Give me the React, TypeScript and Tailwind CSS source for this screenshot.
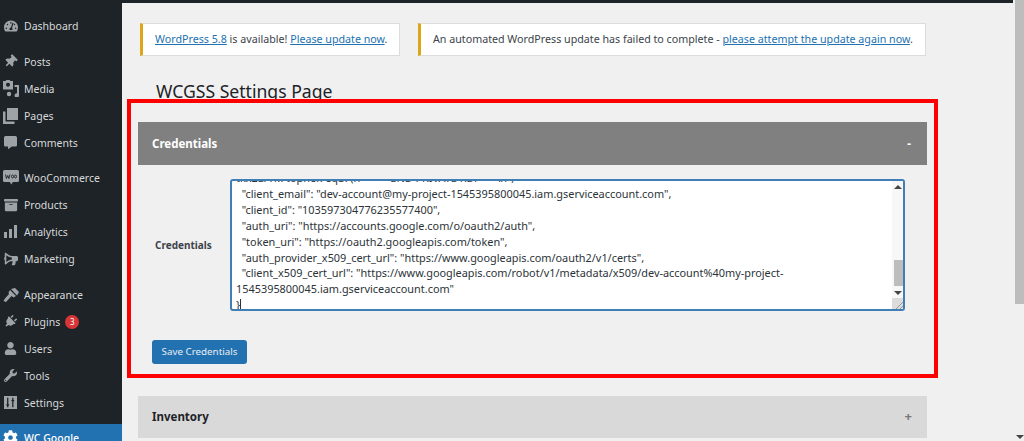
import type { ReactNode } from 'react';
import { FaTachometerAlt, FaThumbtack, FaCommentAlt, FaArchive, FaBullhorn, FaPlug, FaUser, FaWrench, FaCog } from 'react-icons/fa';

const font = "font-['Noto_Sans','Open_Sans',sans-serif]";

function MediaIcon() {
  return (
    <svg width="16" height="17" viewBox="0 0 16 17" fill="currentColor">
      <path d="M0 1h2.500l1-1h3l1 1H10v8.500H0z" />
      <circle cx="5" cy="4.700" r="2" fill="#1d2327" />
      <path d="M11.500 5H16v10.500a2.200 2.200 0 1 1-2-2.200V7h-2.500z" />
      <circle cx="6" cy="14" r="2.200" />
    </svg>
  );
}

function PagesIcon() {
  return (
    <svg width="15" height="16" viewBox="0 0 15 16" fill="currentColor">
      <path d="M4 0h11v12H4z" />
      <path d="M0 3.500h2.500v10h9V16H0z" />
    </svg>
  );
}

function WooIcon() {
  return (
    <svg width="16" height="15" viewBox="0 0 16 15" fill="currentColor">
      <path d="M1.500 0h13A1.500 1.500 0 0 1 16 1.500v9a1.500 1.500 0 0 1-1.500 1.500H10l-2 2.500L7 12H1.500A1.500 1.500 0 0 1 0 10.500v-9A1.500 1.500 0 0 1 1.500 0z" />
      <path d="M2.500 4.500l1 4 1.200-3 1.200 3 1-4M8.500 6.500a1 1.500 0 1 0 2 0 1 1.500 0 1 0-2 0M11.500 6.500a1 1.500 0 1 0 2 0 1 1.500 0 1 0-2 0" fill="none" stroke="#1d2327" strokeWidth="0.9" />
    </svg>
  );
}

function BrushIcon() {
  return (
    <svg width="16" height="14" viewBox="0 0 16 14" fill="currentColor">
      <path d="M8 1l4-1 4 4-2 3.500z" />
      <path d="M7 2l6 6-2.500 1.500L8.500 8 3 14 .500 13 2 10.500l4-4.500-.5-1.500z" />
    </svg>
  );
}

function BarsIcon() {
  return (
    <svg width="14" height="14" viewBox="0 0 14 14" fill="currentColor">
      <rect x="0" y="7" width="3" height="6" />
      <rect x="5" y="4" width="3" height="9" />
      <rect x="10" y="0" width="3" height="13" />
    </svg>
  );
}

function SlidersIcon() {
  return (
    <svg width="13" height="13" viewBox="0 0 14 14">
      <rect width="14" height="14" fill="currentColor" />
      <path d="M4 2v10M2.500 9.500h3M9.500 2v10M8 5h3" stroke="#1d2327" strokeWidth="1.400" fill="none" />
    </svg>
  );
}

interface MenuItemProps {
  icon: ReactNode;
  label: string;
  badge?: string;
  active?: boolean;
  gap?: string;
}

function MenuItem({ icon, label, badge, active, gap }: MenuItemProps) {
  return (
    <div className={`flex items-center h-[27px] shrink-0 ${gap ?? ''} ${active ? 'bg-[#2271b1] text-white font-medium' : 'text-[#d8d9da]'}`}>
      <span className={`w-[24px] flex justify-center pr-[4px] pl-[1px] ${active ? 'text-white' : 'text-[#9ea3a8]'}`}>{icon}</span>
      <span className="text-[10.5px] leading-[16px]">{label}</span>
      {badge && (
        <span className="ml-[5px] w-[14px] h-[14px] rounded-full bg-[#d63638] text-white text-[8px] leading-[14px] text-center">
          {badge}
        </span>
      )}
    </div>
  );
}

function Sidebar() {
  return (
    <div className="w-[122px] shrink-0 h-full bg-[#1d2327] flex flex-col pt-[12px] overflow-hidden">
      <MenuItem icon={<FaTachometerAlt size={14} />} label="Dashboard" />
      <MenuItem gap="mt-[9px]" icon={<FaThumbtack size={13} className="rotate-45" />} label="Posts" />
      <MenuItem icon={<MediaIcon />} label="Media" />
      <MenuItem icon={<PagesIcon />} label="Pages" />
      <MenuItem icon={<FaCommentAlt size={13} />} label="Comments" />
      <MenuItem gap="mt-[8px]" icon={<WooIcon />} label="WooCommerce" />
      <MenuItem icon={<FaArchive size={14} />} label="Products" />
      <MenuItem icon={<BarsIcon />} label="Analytics" />
      <MenuItem icon={<FaBullhorn size={14} className="-scale-x-100" />} label="Marketing" />
      <MenuItem gap="mt-[9px]" icon={<BrushIcon />} label="Appearance" />
      <MenuItem icon={<FaPlug size={13} className="rotate-45" />} label="Plugins" badge="3" />
      <MenuItem icon={<FaUser size={13} />} label="Users" />
      <MenuItem icon={<FaWrench size={13} />} label="Tools" />
      <MenuItem icon={<SlidersIcon />} label="Settings" />
      <MenuItem gap="mt-[8px]" active icon={<FaCog size={15} />} label="WC Google" />
    </div>
  );
}

function Notice({ width, children }: { width: string; children: ReactNode }) {
  return (
    <div className={`${width} h-[33px] flex items-center bg-white border border-[#dcdcdc] border-l-[3px] border-l-[#dba617] pl-[12px] text-[10.7px] text-[#3c434a] whitespace-nowrap`}>
      {children}
    </div>
  );
}

const link = 'text-[#2271b1] underline';

const lines = [
  '  "client_email": "dev-account@my-project-1545395800045.iam.gserviceaccount.com",',
  '  "client_id": "103597304776235577400",',
  '  "auth_uri": "https://accounts.google.com/o/oauth2/auth",',
  '  "token_uri": "https://oauth2.googleapis.com/token",',
  '  "auth_provider_x509_cert_url": "https://www.googleapis.com/oauth2/v1/certs",',
  '  "client_x509_cert_url": "https://www.googleapis.com/robot/v1/metadata/x509/dev-account%40my-project-',
  '1545395800045.iam.gserviceaccount.com"',
];

function CredentialsBox() {
  return (
    <div className="w-[675px] h-[132px] flex bg-white border-2 border-[#3f7fb5] rounded-[3px] overflow-hidden">
      <div className="flex-1 overflow-hidden pl-[4px] text-[10.9px] leading-[15.9px] text-[#2c3338] whitespace-pre">
        <div className="-mt-[11px]">{'tkx2LrTk7tophei7eqa7(n==-----END PRIVATE KEY-----\\n",'}</div>
        {lines.map((line, i) => (
          <div key={i}>{line}</div>
        ))}
        <div className="flex items-center">
          <span>{'}'}</span>
          <span className="w-px h-[13px] bg-[#2c3338]" />
        </div>
      </div>
      <div className="w-[11px] shrink-0 flex flex-col items-center bg-[#f7f7f7]">
        <span className="mt-[4px] w-0 h-0 border-x-[4px] border-x-transparent border-b-[4px] border-b-[#444]" />
        <span className="mt-[71px] w-[9px] h-[26px] ml-[2px] bg-[#bdbdbd]" />
        <span className="mt-[5px] w-0 h-0 border-x-[4px] border-x-transparent border-t-[4px] border-t-[#444]" />
        <span className="mt-auto w-[11px] h-[11px] bg-[#dcdcdc] flex items-end justify-end">
          <svg width="8" height="8" viewBox="0 0 8 8" stroke="#888" strokeWidth="0.8">
            <path d="M1 8l7-7M5 8l3-3" />
          </svg>
        </span>
      </div>
    </div>
  );
}

function PageScrollbar() {
  return (
    <div className="w-[11px] shrink-0 pl-[2px] h-full flex flex-col bg-[#f0f0f1]">
      <div className="h-[304px] bg-[#bdbdbd]" />
      <span className="mt-auto mb-[2px] ml-[1px] w-0 h-0 border-x-[4px] border-x-transparent border-t-[4px] border-t-[#444]" />
    </div>
  );
}

export default function App() {
  return (
    <div className={`relative w-[1024px] h-[441px] overflow-hidden flex bg-[#f0f0f1] ${font}`}>
      <Sidebar />
      <div className="flex-1 min-w-0 flex flex-col">
        <div className="h-[3px] bg-[#1d2327] shrink-0" />
        <div className="flex gap-[18px] ml-[18px] mt-[20px] shrink-0">
          <Notice width="w-[260px]">
            <span>
              <span className={link}>WordPress 5.8</span> is available! <span className={link}>Please update now</span>.
            </span>
          </Notice>
          <Notice width="w-[508px]">
            <span>
              An automated WordPress update has failed to complete -{' '}
              <span className={link}>please attempt the update again now</span>.
            </span>
          </Notice>
        </div>
        <h1 className="ml-[34px] mt-[23px] mb-[19px] h-[24px] text-[17.6px] leading-[24px] font-normal text-[#1d2327]">
          WCGSS Settings Page
        </h1>
        <div className="ml-[16px] w-[789px] flex flex-col">
          <div className="h-[43px] bg-[#808080] flex items-center justify-between pl-[14px] pr-[16px] text-white text-[11.5px] font-bold">
            <span>Credentials</span>
            <span>-</span>
          </div>
          <div className="flex items-center mt-[14px]">
            <label className="ml-[17px] w-[75px] text-[10px] font-bold text-[#3c434a]">Credentials</label>
            <CredentialsBox />
          </div>
          <button className="ml-[14px] mt-[29px] w-[95px] h-[24px] bg-[#2271b1] rounded-[3px] text-[#e8eef4] text-[9.8px] text-center">
            Save Credentials
          </button>
          <div className="mt-[32px] h-[42px] bg-[#d9d9d9] flex items-center justify-between pl-[14px] pr-[15px] text-[#1d2327] text-[11.5px] font-bold">
            <span>Inventory</span>
            <span className="text-[#777] text-[13px]">+</span>
          </div>
        </div>
      </div>
      <PageScrollbar />
      {/* annotation drawn on top of the page */}
      <div className="absolute left-[127px] top-[99px] w-[811px] h-[279px] border-[4px] border-[#fe0000] pointer-events-none" />
    </div>
  );
}
